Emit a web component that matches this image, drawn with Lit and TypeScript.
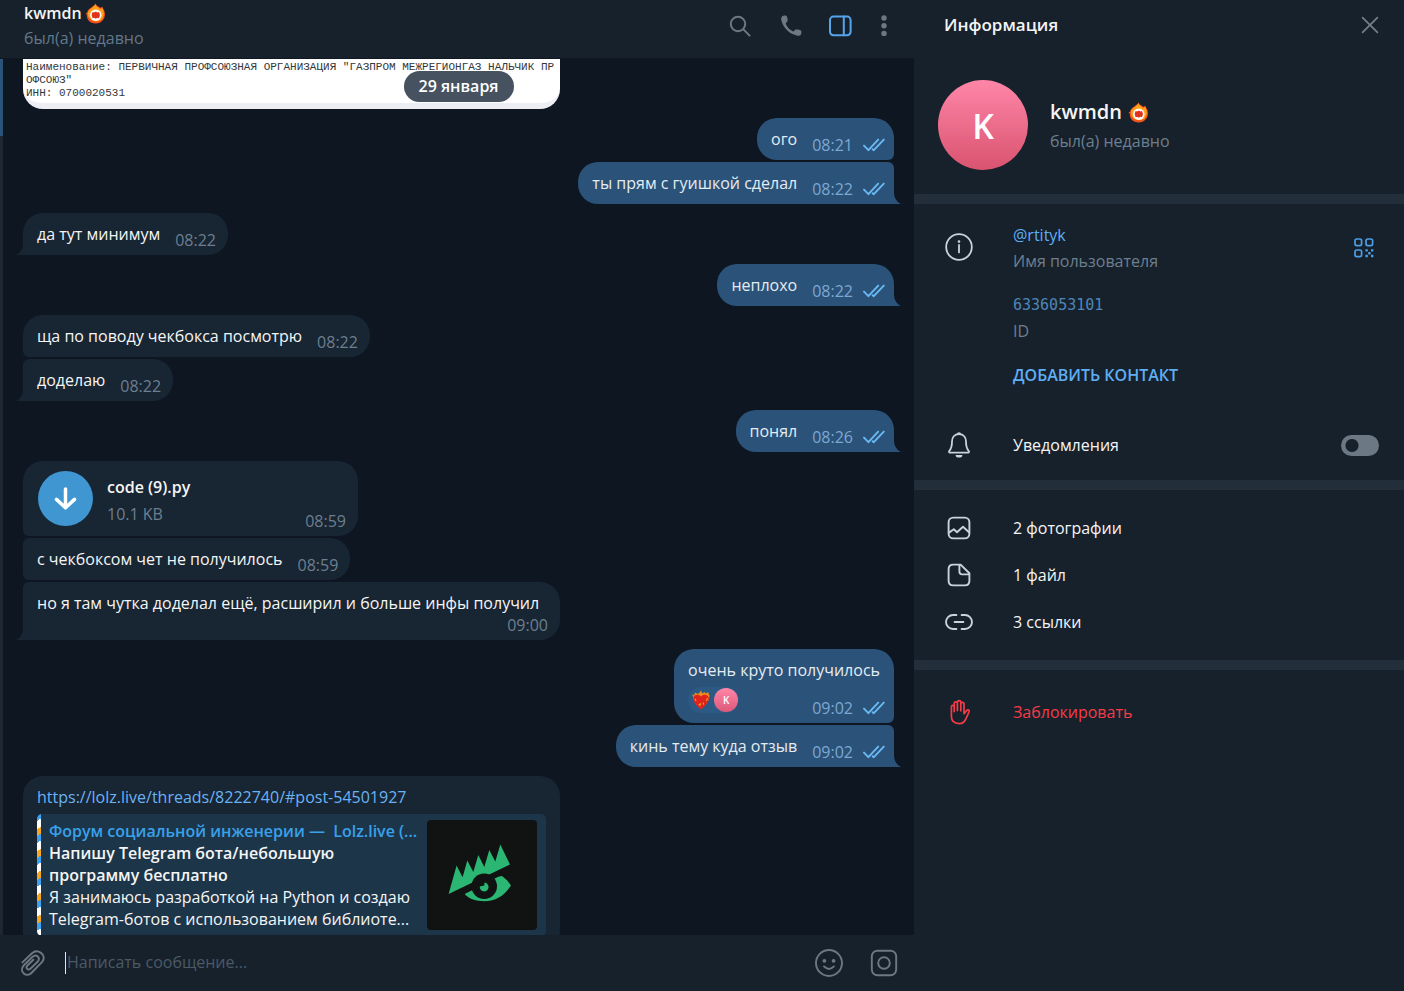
import { LitElement, html, css, svg, nothing } from "lit";
import { customElement, property } from "lit/decorators.js";

const fire = html`<svg class="fire" viewBox="0 0 21 21" aria-hidden="true">
  <path d="M10.6 .4C11.3 2.6 13.6 3.2 15.2 4.8L17.6 3.8C17.6 5.4 18.6 6.4 19.4 8C21.4 13.6 18 20.4 10.8 20.6C4.6 20.7 1.4 16.2 1.8 11.6L.4 10.8L2.2 9.4C2.6 5.4 7.6 4.6 10.6 .4Z" fill="#f4511e"/>
  <path d="M10.4 1.4C11 3.6 14 4.4 15.2 6L17.2 5C19.2 8.6 19.4 12.6 17.4 15.2C15.6 18 12 18.8 8.8 18C4.6 16.8 2.6 13.2 2.8 10.2C3.2 6.2 8.2 5 10.4 1.4Z" fill="#ffa21a"/>
  <circle cx="10.8" cy="12.2" r="5.7" fill="#fff"/>
  <path d="M7.6 9L9.2 9.4L10.8 8.6L12.4 9.4L14 9L15 12L14 15.2L12.4 14.8L10.8 15.8L9.2 14.8L7.6 15.2L6.6 12Z" fill="#e0311b"/>
</svg>`;

const checks = html`<svg class="checks" viewBox="0 0 22 14" aria-hidden="true">
  <path d="M1 7.6L5.4 12.2L15.2 1.6M9.6 11.2L10.8 12.2L20.8 1.6" fill="none" stroke="#6ab9f5" stroke-width="1.9" stroke-linecap="round" stroke-linejoin="round"/>
</svg>`;

const line = (size: number, body: unknown, width = 2) => html`<svg
  width=${size} height=${size} viewBox="0 0 ${size} ${size}" fill="none"
  stroke="currentColor" stroke-width=${width} stroke-linecap="round" stroke-linejoin="round" aria-hidden="true">${body}</svg>`;

const icons = {
  search: line(24, svg`<circle cx="10" cy="10" r="7.2"/><path d="M15.4 15.4L21.6 21.6"/>`),
  phone: line(24, svg`<path fill="currentColor" stroke="none" d="M4.2 2.2C5.4 1.4 7.6 1.4 8.6 2C9.6 3.2 9.8 6 9.4 7.4C9 8.4 7.8 8.6 7.8 9.6C8.6 12.8 12 16.4 15.2 17.4C16.4 17.6 16.4 16 17.6 15.6C19.2 15.2 21.8 15.6 23 16.6C23.6 17.6 23.6 19.6 22.8 20.8C21.8 22 20.2 22 18.6 21.6C11 19.6 5.4 14.2 3.4 6.6C3 5 3 3.2 4.2 2.2Z"/>`),
  panel: line(24, svg`<rect x="2" y="2.6" width="20.6" height="18.6" rx="3.4"/><path d="M15.8 2.6V21.2"/>`),
  dots: line(24, svg`<g fill="currentColor" stroke="none"><circle cx="12" cy="4" r="2.7"/><circle cx="12" cy="11.8" r="2.7"/><circle cx="12" cy="19.4" r="2.7"/></g>`),
  close: line(18, svg`<path d="M1.6 1.6L16.4 16.4M16.4 1.6L1.6 16.4"/>`, 1.7),
  clip: line(30, svg`<path d="M5.4 14.4L15 5.2C20.4 .6 30 6.2 25.4 13.6L14.4 25C9.4 30 1.8 23.6 6.4 17.8L15.6 8.8C19.4 5.4 24 9.8 20.6 13.8L13.4 20.8C10.8 22.6 8.4 20 10.2 17.8L16.4 11.8"/>`, 1.9),
  smile: line(30, svg`<circle cx="15" cy="15" r="13"/><path d="M10 18.4Q15 23.4 20 18.4"/><g fill="currentColor" stroke="none"><circle cx="10.4" cy="12.8" r="1.9"/><circle cx="19.6" cy="12.8" r="1.9"/></g>`, 1.9),
  camera: line(30, svg`<rect x="2.8" y="2.8" width="24.4" height="24.4" rx="5.6"/><circle cx="15" cy="15" r="5.8"/>`, 1.9),
  info: line(30, svg`<circle cx="15" cy="15" r="12.8"/><path d="M15 13V20.4"/><circle cx="15" cy="9.6" r="1.3" fill="currentColor" stroke="none"/>`, 1.8),
  qr: line(22, svg`<rect x="2" y="2" width="6.6" height="6.6" rx="1.8"/><rect x="13" y="2" width="6.6" height="6.6" rx="1.8"/><rect x="2" y="13" width="6.6" height="6.6" rx="1.8"/><path stroke="none" fill="currentColor" d="M12.4 12.2h2.4v2.4h-2.4zM18 12.2h2.4v2.4H18zM15.2 15h2.4v2.4h-2.4zM12.4 17.8h2.4v2.4h-2.4zM18 17.8h2.4v2.4H18z"/>`, 1.7),
  bell: line(30, svg`<path d="M15 4C10.4 4 8 7.6 8 11.6C8 16.8 7.6 18.4 5.4 20.8C4.6 21.8 5 22.6 6 22.6H24C25 22.6 25.4 21.8 24.6 20.8C22.4 18.4 22 16.8 22 11.6C22 7.6 19.6 4 15 4Z"/><path stroke="none" fill="currentColor" d="M13 4.2A2 2 0 0 1 17 4.2ZM11.6 25H18.4A3.4 2.6 0 0 1 11.6 25Z"/>`, 1.8),
  photo: line(30, svg`<rect x="4.6" y="4.6" width="20.8" height="20.8" rx="4.6"/><path d="M5 19.6L9.8 16.2L13 19.2L19 13.8L25 19.2"/>`, 1.9),
  file: line(30, svg`<path d="M9.2 4.6H16.6L25.4 13.2V20.8Q25.4 25.4 20.8 25.4H9.2Q4.6 25.4 4.6 20.8V9.2Q4.6 4.6 9.2 4.6ZM15.4 5V11.6Q15.4 14.4 18.2 14.4H25"/>`, 1.9),
  link: line(30, svg`<path d="M12.4 8H9A6.9 6.9 0 0 0 9 22H12.4M17.6 8H21A6.9 6.9 0 0 1 21 22H17.6M10.6 15H19.4"/>`, 1.9),
  hand: line(30, svg`<path d="M7.4 19.6V9.8C7.4 7.8 10.2 7.8 10.2 9.8V14.6V6.4C10.2 4.4 13.4 4.4 13.4 6.4V13.6V5.2C13.4 3.2 16.8 3.2 16.8 5.2V13.8V6.8C16.8 4.8 20 4.8 20 6.8V16.6L22.6 13.6C24 12.2 25.8 13.2 25 15L22 21.6C20.6 25.2 18.4 26.6 15.2 26.6C10.4 26.6 7.4 24 7.4 19.6Z"/>`, 1.7),
};

@customElement("chat-bubble")
class ChatBubble extends LitElement {
  @property() text = "";
  @property() time = "";
  @property({ type: Boolean }) out = false;
  @property({ type: Boolean }) first = false;
  @property({ type: Boolean }) last = false;
  @property() kind = "text";

  static styles = css`
    :host { display: block; max-width: 537px; align-self: flex-start; margin-top: 2px; }
    :host([out]) { align-self: flex-end; }
    :host([first]) { margin-top: 9px; }
    .bubble {
      position: relative; display: flex; flex-wrap: wrap; justify-content: space-between; align-items: flex-end;
      column-gap: 15px; padding: 10px 12px 4px 14px; background: #182533; color: #f5f5f5;
      border-radius: 6px 20px 20px 6px;
    }
    .first { border-top-left-radius: 20px; }
    .last { border-bottom-left-radius: 0; }
    .out { background: #2b5278; color: #e4ecf2; padding-right: 9px; border-radius: 20px 6px 6px 20px; }
    .out.first { border-top-left-radius: 20px; border-top-right-radius: 20px; }
    .out.last { border-bottom-left-radius: 20px; border-bottom-right-radius: 0; }
    .last::after {
      content: ""; position: absolute; bottom: 0; left: -7px; width: 7px; height: 12px; background: inherit;
      clip-path: path("M7 0C7 6 4 10 0 12H7Z");
    }
    .out.last::after { left: auto; right: -7px; clip-path: path("M0 0C0 6 3 10 7 12H0Z"); }
    .text { align-self: flex-start; }
    .meta { display: flex; align-items: center; gap: 10px; margin-top: 6px; margin-left: auto; color: #6d7f8f; }
    .out .meta { color: #7da8d3; }
    .wide .meta { margin-top: 0; }
    .checks { width: 22px; height: 14px; }
    .reaction { display: grid; grid-template-columns: auto auto; }
    .reaction .text { grid-column: 1 / -1; padding-right: 5px; }
    .reaction .meta { margin-top: 0; }
    .reactions {
      display: flex; align-items: center; justify-self: start; gap: 4px; height: 26px; margin: 6px 0;
      padding: 0 1px 0 4px; border: 0; border-radius: 13px; background: #2d5a84; font: inherit;
    }
    .heart { width: 18px; height: 20px; }
    .mini {
      width: 24px; height: 24px; border-radius: 50%; background: linear-gradient(#ff86a8, #dd5878);
      color: #fff; font-size: 10px; font-weight: 600; line-height: 24px; text-align: center;
    }
    .file { min-width: 309px; flex-wrap: nowrap; }
    .attach { display: flex; align-items: center; gap: 14px; margin-bottom: 6px; padding-left: 1px; }
    .load {
      display: grid; place-items: center; width: 55px; height: 55px; padding: 0; border: 0; border-radius: 50%;
      background: #3f96d0; color: #fff;
    }
    .names { display: grid; gap: 5px; padding-top: 4px; }
    .name { font-weight: 600; }
    .size { color: #6d7f8f; }
    .link { display: block; padding-bottom: 14px; }
    a { color: #6ab3f3; text-decoration: none; }
    .preview {
      display: grid; grid-template-columns: 4px minmax(0, 1fr) 110px; margin: 6px 2px 0 0; padding-right: 9px;
      background: #1d3549; border-radius: 5px; overflow: hidden;
    }
    .stripe { background: repeating-linear-gradient(150deg, #3fa2f0 0 6px, #fff 6px 13px, #f5a623 13px 19px); }
    .about { padding: 6px 8px; }
    .about > * { display: block; margin: 0; }
    .site { color: #39a1ea; font-weight: 600; white-space: pre; }
    .headline { font-weight: 600; }
    .thumb { width: 110px; height: 110px; margin: 6px 0; border-radius: 4px; }
  `;

  private body() {
    if (this.kind === "file") {
      return html`<div class="attach">
        <button class="load" aria-label="Скачать code (9).py">
          ${line(25, svg`<path d="M12.5 3V21.4M3.5 13.4L12.5 21.8L21.5 13.4"/>`, 3.5)}
        </button>
        <div class="names"><span class="name">code (9).py</span><span class="size">10.1 KB</span></div>
      </div>`;
    }
    if (this.kind === "reaction") {
      return html`<span class="text">${this.text}</span>
        <button class="reactions" aria-label="Реакция">
          <svg class="heart" viewBox="0 0 18 20" aria-hidden="true">
            <path d="M9 19L2 11.6L.4 4.6L2.4 5L3 2.4L6 4L7.6 2.4L9 .6L10.4 3.4L12.4 2L14 3.6L16 2L17.6 6L16 11.6Z" fill="#ef8b1c"/>
            <path d="M9 19.4C5 16.4 1.2 12 1.2 8.2C1.2 4.4 6.6 3.4 9 6.4C11.4 3.4 16.8 4.4 16.8 8.2C16.8 12 13 16.4 9 19.4Z" fill="#e0241d"/>
            <path d="M3 8.6L4 11M15.4 8L14.6 11M6.8 14L8 15.6L8.4 13.2M11.2 12.6L11.6 14.6" fill="none" stroke="#ffb31f" stroke-width="1"/>
          </svg>
          <span class="mini">K</span>
        </button>`;
    }
    if (this.kind === "link") {
      return html`<a href="#post">${this.text}</a>
        <div class="preview">
          <span class="stripe"></span>
          <div class="about">
            <a class="site" href="#site">Форум социальной инженерии —  Lolz.live (...</a>
            <strong class="headline">Напишу Telegram бота/небольшую программу бесплатно</strong>
            <p>Я занимаюсь разработкой на Python и создаю Telegram-ботов с использованием библиоте...</p>
          </div>
          <svg class="thumb" viewBox="0 0 110 110" aria-hidden="true">
            <rect width="110" height="110" fill="#111212"/>
            <path d="M21.6 74L29.6 45.6L35.6 57.3L40.3 40.6L46.3 52L51.3 35L57.3 47L62.3 30L68.3 41.6L73.3 24.6L83 44.6Z" fill="#2bb673"/>
            <path d="M37.6 74L44.6 70.6L68.3 58.3Q71 56.2 75 56Q80 59.4 84 65.6C77 76 69 81.2 57.4 81.2C49 81.2 42 79 37.6 74Z" fill="#2bb673"/>
            <circle cx="57.2" cy="66.2" r="12.8" fill="#111212"/>
            <path d="M52.8 66.4L57.2 65.4L57.6 62.6A4.4 4.4 0 1 1 52.8 66.4Z" fill="#2bb673"/>
          </svg>
        </div>`;
    }
    return html`<span class="text">${this.text}</span>`;
  }

  render() {
    const cls = ["bubble", this.kind, this.out && "out", this.first && "first", this.last && "last"].filter(Boolean).join(" ");
    return html`<div class=${cls}>
      ${this.body()}
      ${this.time ? html`<span class="meta"><time>${this.time}</time>${this.out ? checks : nothing}</span>` : nothing}
    </div>`;
  }
}

interface Message { text?: string; time?: string; out?: boolean; first?: boolean; last?: boolean; kind?: string; }

const messages: Message[] = [
  { text: "ого", time: "08:21", out: true, first: true },
  { text: "ты прям с гуишкой сделал", time: "08:22", out: true, last: true },
  { text: "да тут минимум", time: "08:22", first: true, last: true },
  { text: "неплохо", time: "08:22", out: true, first: true, last: true },
  { text: "ща по поводу чекбокса посмотрю", time: "08:22", first: true },
  { text: "доделаю", time: "08:22", last: true },
  { text: "понял", time: "08:26", out: true, first: true, last: true },
  { kind: "file", time: "08:59", first: true },
  { text: "с чекбоксом чет не получилось", time: "08:59" },
  { text: "но я там чутка доделал ещё, расширил и больше инфы получил", time: "09:00", last: true, kind: "wide" },
  { text: "очень круто получилось", time: "09:02", out: true, first: true, kind: "reaction" },
  { text: "кинь тему куда отзыв", time: "09:02", out: true, last: true },
  { text: "https://lolz.live/threads/8222740/#post-54501927", first: true, kind: "link" },
];

@customElement("info-panel")
class InfoPanel extends LitElement {
  static styles = css`
    :host { display: block; background: #17212b; color: #f5f5f5; }
    header { display: flex; align-items: center; justify-content: space-between; height: 50px; padding: 0 25px 0 30px; }
    h2 { margin: 0; font-size: 17px; font-weight: 600; }
    button { padding: 0; border: 0; background: none; color: inherit; font: inherit; text-align: left; }
    svg { display: block; }
    .close { color: #74808c; }
    .profile { display: flex; align-items: center; gap: 22px; padding: 30px 24px 24px; }
    .avatar {
      width: 90px; height: 90px; border-radius: 50%; background: linear-gradient(#ff86a8, #d9536f);
      color: #fff; font-size: 34px; font-weight: 600; line-height: 92px; text-align: center;
    }
    .who { display: grid; gap: 4px; }
    .name { display: flex; align-items: center; gap: 6px; font-size: 20px; font-weight: 600; line-height: 28px; }
    .fire { width: 21px; height: 21px; }
    .muted { color: #6d7f8f; }
    section { border-top: 10px solid #232e3b; }
    .row {
      display: grid; grid-template-columns: 30px 1fr auto; column-gap: 39px; align-items: center;
      width: 100%; padding: 0 25px 0 30px; box-sizing: border-box;
    }
    .info { align-items: start; padding-top: 20px; }
    .info > svg { margin-top: 8px; }
    .fields { display: grid; gap: 22px; }
    .field { display: grid; gap: 4px; }
    .qr { color: #4a9fe8; margin: 13px 4px 0 0; }
    .icon { color: #c9d3dc; }
    a, .add { color: #5eaef5; text-decoration: none; }
    .id { color: #4e86b8; font-family: "DejaVu Sans Mono", monospace; font-size: 15px; }
    .add { font-weight: 600; text-transform: uppercase; }
    .notify { height: 70px; margin-top: 24px; }
    input {
      appearance: none; width: 38px; height: 21px; margin: 0; border-radius: 11px; cursor: pointer;
      background: radial-gradient(circle at 11px 50%, #17212b 6px, #6c7883 7px);
    }
    .media { padding: 14px 0 15px; }
    .item { height: 47px; }
    .danger { padding-top: 18px; }
    .danger .row, .danger .icon { color: #f53b46; }
  `;

  render() {
    const item = (icon: unknown, label: string) => html`<button class="row item"><span class="icon">${icon}</span><span>${label}</span></button>`;
    return html`
      <header><h2>Информация</h2><button class="close" aria-label="Закрыть">${icons.close}</button></header>
      <div class="profile">
        <div class="avatar">K</div>
        <div class="who"><span class="name">kwmdn ${fire}</span><span class="muted">был(а) недавно</span></div>
      </div>
      <section>
        <div class="row info icon">
          ${icons.info}
          <div class="fields">
            <div class="field"><a href="#user">@rtityk</a><span class="muted">Имя пользователя</span></div>
            <div class="field"><span class="id">6336053101</span><span class="muted">ID</span></div>
            <button class="add">Добавить контакт</button>
          </div>
          <button class="qr" aria-label="QR-код">${icons.qr}</button>
        </div>
        <div class="row notify">
          <span class="icon">${icons.bell}</span><label for="notify">Уведомления</label>
          <input id="notify" type="checkbox" role="switch">
        </div>
      </section>
      <section class="media">
        ${item(icons.photo, "2 фотографии")}${item(icons.file, "1 файл")}${item(icons.link, "3 ссылки")}
      </section>
      <section class="danger">${item(icons.hand, "Заблокировать")}</section>
    `;
  }
}

@customElement("app-root")
class AppRoot extends LitElement {
  static styles = css`
    :host {
      display: grid; grid-template-columns: minmax(0, 1fr) 490px; height: 100vh; overflow: hidden;
      background: #17212b; color: #f5f5f5; font: 16px/22px "Open Sans", "Noto Sans", sans-serif;
    }
    svg { display: block; }
    button { padding: 0; border: 0; background: none; color: #6c7883; }
    .chat { display: grid; grid-template-rows: auto minmax(0, 1fr) auto; min-height: 0; }
    .top {
      display: flex; align-items: center; justify-content: space-between; height: 58px; padding: 0 18px 0 24px;
      border-bottom: 1px solid #101923;
    }
    .peer { display: grid; gap: 3px; padding-bottom: 7px; }
    .title { display: flex; align-items: center; gap: 3px; margin: 0; font-size: 16px; font-weight: 600; }
    .fire { width: 21px; height: 21px; }
    .muted { color: #637789; }
    .tools { display: flex; gap: 26px; padding-bottom: 6px; }
    .tools .active { color: #55a5ec; }
    .tools .more { margin-left: -6px; }
    .middle { display: grid; grid-template-columns: 3px minmax(0, 1fr); min-height: 0; background: #0e1621; }
    .edge { background: linear-gradient(#2b5278 77px, #1d2834 77px); }
    .history { position: relative; display: grid; min-height: 0; }
    .list { display: flex; flex-direction: column; min-height: 0; overflow: hidden; padding: 0 20px; }
    .list > * { flex: none; }
    .shot {
      width: 537px; max-width: 100%; box-sizing: border-box; margin: 0; padding: 2px 0 3px 3px; overflow: hidden;
      border-bottom: 6px solid #eceef3; border-radius: 0 0 20px 20px; background: #fff; color: #33373b;
      font: 11px/13px "Liberation Mono", monospace; white-space: pre;
    }
    .date {
      position: absolute; top: 12px; left: 50%; translate: -50% 0; padding: 4px 15px 5px; border-radius: 16px;
      background: #46525f; color: #fff; font-weight: 600;
    }
    .compose { display: flex; align-items: center; height: 56px; padding: 0 15px 0 17px; }
    .caret { width: 1px; height: 22px; margin-left: 18px; background: #dfe7ee; }
    input {
      flex: 1; min-width: 0; padding: 0 0 2px 1px; border: 0; outline: 0; background: none; color: #f5f5f5; font: inherit;
    }
    input::placeholder { color: #4c5966; opacity: 1; }
    .actions { display: flex; gap: 25px; }
  `;

  render() {
    return html`
      <main class="chat">
        <header class="top">
          <div class="peer">
            <h1 class="title">kwmdn ${fire}</h1>
            <span class="muted">был(а) недавно</span>
          </div>
          <div class="tools">
            <button aria-label="Поиск">${icons.search}</button>
            <button aria-label="Позвонить">${icons.phone}</button>
            <button class="active" aria-label="Информация">${icons.panel}</button>
            <button class="more" aria-label="Ещё">${icons.dots}</button>
          </div>
        </header>
        <div class="middle">
          <div class="edge"></div>
          <div class="history">
            <div class="list">
              <p class="shot">Наименование: ПЕРВИЧНАЯ ПРОФСОЮЗНАЯ ОРГАНИЗАЦИЯ "ГАЗПРОМ МЕЖРЕГИОНГАЗ НАЛЬЧИК ПР
ОФСОЮЗ"
ИНН: 0700020531</p>
              ${messages.map((m) => html`<chat-bubble
                .text=${m.text ?? ""} .time=${m.time ?? ""} .kind=${m.kind ?? "text"}
                ?out=${m.out} ?first=${m.first} ?last=${m.last}></chat-bubble>`)}
            </div>
            <time class="date">29 января</time>
          </div>
        </div>
        <form class="compose">
          <button type="button" aria-label="Прикрепить">${icons.clip}</button>
          <span class="caret"></span>
          <input aria-label="Сообщение" placeholder="Написать сообщение...">
          <div class="actions">
            <button type="button" aria-label="Эмодзи">${icons.smile}</button>
            <button type="button" aria-label="Видеосообщение">${icons.camera}</button>
          </div>
        </form>
      </main>
      <info-panel></info-panel>
    `;
  }
}
